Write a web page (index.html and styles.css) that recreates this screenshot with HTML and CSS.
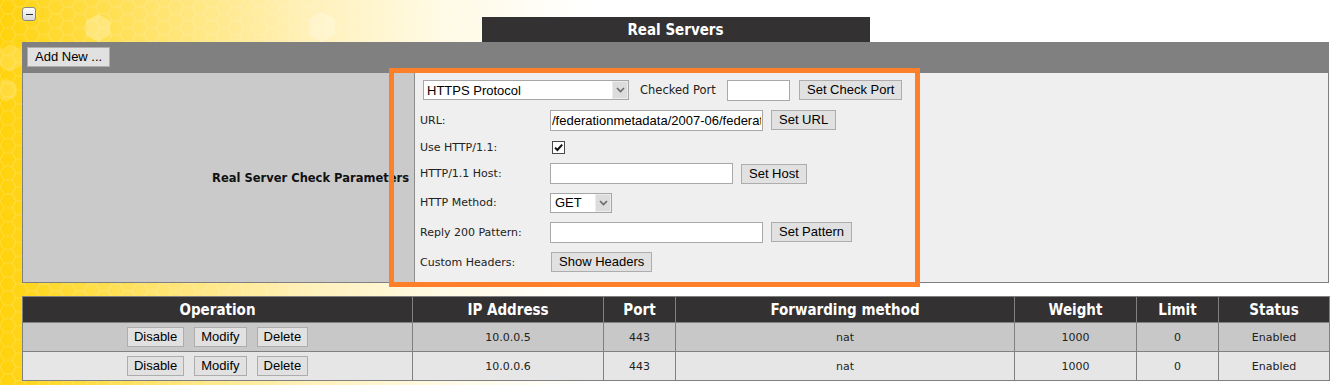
FILE: index.html
```html
<!DOCTYPE html>
<html lang="en">
<head>
<meta charset="utf-8">
<title>Real Servers</title>
<link rel="stylesheet" href="styles.css">
</head>
<body>
<svg class="bg-hex" width="1344" height="385" viewBox="0 0 1344 385" aria-hidden="true">
  <defs>
    <pattern id="hex" width="24" height="13.856" patternUnits="userSpaceOnUse">
      <path d="M4 0 L12 0 L16 6.928 L12 13.856 L4 13.856 L0 6.928 Z M16 6.928 L24 6.928" fill="none" stroke="#ffffff" stroke-opacity="0.22" stroke-width="1"/>
    </pattern>
    <linearGradient id="fade" x1="0" y1="0" x2="1344" y2="0" gradientUnits="userSpaceOnUse">
      <stop offset="0" stop-color="#fff" stop-opacity="1"/>
      <stop offset="0.33" stop-color="#fff" stop-opacity="0.7"/>
      <stop offset="0.5" stop-color="#fff" stop-opacity="0"/>
    </linearGradient>
    <mask id="fadeMask">
      <rect x="0" y="0" width="1344" height="385" fill="url(#fade)"/>
    </mask>
  </defs>
  <g mask="url(#fadeMask)">
    <rect x="0" y="0" width="1344" height="385" fill="url(#hex)"/>
    <polygon points="98,14 110.1,21 110.1,35 98,42 85.9,35 85.9,21" fill="#ffffff" fill-opacity="0.28"/>
    <polygon points="322,12 335,19.5 335,34.5 322,42 309,34.5 309,19.5" fill="#ffffff" fill-opacity="0.3"/>
    <polygon points="10,44 22.1,51 22.1,65 10,72 -2.1,65 -2.1,51" fill="#ffffff" fill-opacity="0.18"/>
    <polygon points="6,78 16.4,84 16.4,96 6,102 -4.4,96 -4.4,84" fill="#ffffff" fill-opacity="0.18"/>
  </g>
</svg>
<div class="wrap">
  <div class="titlebar">
    <button class="toggle" type="button" aria-label="Collapse"><span class="toggle-bar"></span></button>
    <h1 class="title">Real Servers</h1>
  </div>
  <div class="panel">
    <div class="panel-head">
      <button class="btn" type="button">Add New ...</button>
    </div>
    <div class="panel-body">
      <div class="param-label">Real Server Check Parameters</div>
      <div class="param-form">
        <div class="frow frow-1">
          <span class="sel sel-proto">
            <select><option>HTTPS Protocol</option></select>
            <span class="sel-arrow"><svg width="9" height="6" viewBox="0 0 9 6"><path d="M1 1 L4.5 4.5 L8 1" fill="none" stroke="#6a6a6a" stroke-width="1.6"/></svg></span>
          </span>
          <span class="port-label">Checked Port</span>
          <input class="txt txt-port" type="text" value="">
          <button class="btn btn-port" type="button">Set Check Port</button>
        </div>
        <div class="frow frow-2">
          <span class="flabel">URL:</span>
          <input class="txt txt-url" type="text" value="/federationmetadata/2007-06/federationmetadata.xml">
          <button class="btn btn-after" type="button">Set URL</button>
        </div>
        <div class="frow frow-3">
          <span class="flabel">Use HTTP/1.1:</span>
          <span class="chk" role="checkbox" aria-checked="true"><svg width="11" height="11" viewBox="0 0 11 11"><path d="M2 5.6 L4.4 8 L9.2 2.6" fill="none" stroke="#111" stroke-width="2"/></svg></span>
        </div>
        <div class="frow frow-4">
          <span class="flabel">HTTP/1.1 Host:</span>
          <input class="txt txt-host" type="text" value="">
          <button class="btn btn-after" type="button">Set Host</button>
        </div>
        <div class="frow frow-5">
          <span class="flabel">HTTP Method:</span>
          <span class="sel sel-method">
            <select><option>GET</option></select>
            <span class="sel-arrow"><svg width="9" height="6" viewBox="0 0 9 6"><path d="M1 1 L4.5 4.5 L8 1" fill="none" stroke="#6a6a6a" stroke-width="1.6"/></svg></span>
          </span>
        </div>
        <div class="frow frow-6">
          <span class="flabel">Reply 200 Pattern:</span>
          <input class="txt txt-url" type="text" value="">
          <button class="btn btn-after" type="button">Set Pattern</button>
        </div>
        <div class="frow frow-7">
          <span class="flabel">Custom Headers:</span>
          <button class="btn btn-headers" type="button">Show Headers</button>
        </div>
      </div>
    </div>
    <div class="highlight"></div>
  </div>
  <table class="servers">
    <colgroup>
      <col class="c-op"><col class="c-ip"><col class="c-port"><col class="c-fwd"><col class="c-wt"><col class="c-lim"><col class="c-st">
    </colgroup>
    <thead>
      <tr><th>Operation</th><th>IP Address</th><th>Port</th><th>Forwarding method</th><th>Weight</th><th>Limit</th><th>Status</th></tr>
    </thead>
    <tbody>
      <tr class="row-a">
        <td><div class="ops"><button class="btn btn-sm" type="button">Disable</button><button class="btn btn-sm" type="button">Modify</button><button class="btn btn-sm" type="button">Delete</button></div></td>
        <td>10.0.0.5</td><td>443</td><td>nat</td><td>1000</td><td>0</td><td>Enabled</td>
      </tr>
      <tr class="row-b">
        <td><div class="ops"><button class="btn btn-sm" type="button">Disable</button><button class="btn btn-sm" type="button">Modify</button><button class="btn btn-sm" type="button">Delete</button></div></td>
        <td>10.0.0.6</td><td>443</td><td>nat</td><td>1000</td><td>0</td><td>Enabled</td>
      </tr>
    </tbody>
  </table>
</div>
</body>
</html>
```

FILE: styles.css
```css
* { box-sizing: border-box; }

html, body { margin: 0; padding: 0; }

body {
  position: relative;
  width: 1344px;
  height: 385px;
  overflow: hidden;
  font-family: "DejaVu Sans", Verdana, sans-serif;
  font-size: 11px;
  color: #222;
  background: linear-gradient(to right, #ffd20a 0px, #ffd92c 50px, #ffe470 160px, #fff0b6 300px, #fffae4 440px, #ffffff 590px);
}

.bg-hex {
  position: absolute;
  left: 0;
  top: 0;
  pointer-events: none;
}

.wrap {
  position: relative;
  width: 1307px;
  margin-left: 22px;
}

/* title bar */
.titlebar {
  display: grid;
  grid-template-columns: 1fr 388px 1fr;
  padding-top: 7px;
}

.toggle {
  grid-column: 1;
  grid-row: 1;
  justify-self: start;
  align-self: start;
  width: 14px;
  height: 14px;
  padding: 0;
  border: 1px solid #8a8a8a;
  border-radius: 3px;
  background: linear-gradient(#ffffff, #d9d9d9);
  display: flex;
  align-items: center;
  justify-content: center;
}

.toggle-bar {
  width: 7px;
  height: 1px;
  background: #333;
}

.title {
  grid-column: 2;
  grid-row: 1;
  margin: 10px 0 0;
  height: 25px;
  background: #333132;
  color: #fff;
  font-family: "DejaVu Sans Condensed", "DejaVu Sans", sans-serif;
  font-stretch: condensed;
  font-weight: bold;
  font-size: 15px;
  display: flex;
  align-items: center;
  justify-content: center;
}

/* panel */
.panel {
  position: relative;
  border: 1px solid #808080;
  border-top: 0;
}

.panel-head {
  height: 31px;
  background: #808080;
  padding: 5px 4px 0;
}

.panel-body {
  display: flex;
  height: 209px;
}

.param-label {
  width: 392px;
  background: #cacaca;
  border-right: 1px solid #8c8c8c;
  display: flex;
  align-items: center;
  justify-content: flex-end;
  padding-right: 5px;
  font-weight: bold;
  font-size: 11.5px;
  color: #111;
}

.param-form {
  flex: 1;
  background: #efefef;
  padding: 2px 0 4px 5px;
}

.frow {
  display: flex;
  align-items: center;
}

.frow-1 { height: 30px; padding-left: 3px; }
.frow-2 { height: 30px; }
.frow-3 { height: 25px; }
.frow-4 { height: 27px; }
.frow-5 { height: 31px; }
.frow-6 { height: 28px; }
.frow-7 { height: 32px; }

.flabel {
  width: 130px;
  flex: none;
  color: #222;
}

.port-label {
  margin-left: 11px;
  width: 76px;
  font-size: 11.5px;
  color: #222;
}

/* controls */
.btn {
  height: 20px;
  padding: 0 7px;
  border: 1px solid #adadad;
  border-radius: 0;
  background: #e1e1e1;
  color: #000;
  font-family: "Liberation Sans", Arial, sans-serif;
  font-size: 13px;
  line-height: 18px;
  white-space: nowrap;
}

.btn-port { margin-left: 9px; }
.btn-after { margin-left: 8px; }
.btn-headers { margin-left: 1px; }

.txt {
  height: 21px;
  border: 1px solid #a9a9a9;
  background: #fff;
  padding: 0 1px;
  margin: 0;
  color: #000;
  font-family: "Liberation Sans", Arial, sans-serif;
  font-size: 13px;
  outline: none;
}

.txt-port { width: 63px; margin-left: 11px; }
.txt-url { width: 213px; }
.txt-host { width: 183px; }

.sel {
  display: inline-flex;
  height: 20px;
  border: 1px solid #a6a6a6;
  background: #fff;
}

.sel select {
  appearance: none;
  -webkit-appearance: none;
  flex: 1;
  min-width: 0;
  height: 18px;
  border: 0;
  margin: 0;
  padding: 0 3px;
  background: transparent;
  color: #000;
  font-family: "Liberation Sans", Arial, sans-serif;
  font-size: 13px;
  outline: none;
}

.sel-arrow {
  width: 16px;
  flex: none;
  background: #dcdcdc;
  border: 1px solid #ececec;
  display: flex;
  align-items: center;
  justify-content: center;
}

.sel-proto { width: 206px; }
.sel-method { width: 62px; }
.sel-method select { padding-left: 4px; }

.chk {
  width: 13px;
  height: 13px;
  margin-left: 2px;
  border: 1px solid #4a4a4a;
  background: #fff;
  display: flex;
}

/* orange highlight drawn over the form */
.highlight {
  position: absolute;
  left: 366px;
  top: 26px;
  width: 531px;
  height: 219px;
  border: 5px solid #fd7f2a;
  pointer-events: none;
}

/* servers table */
.servers {
  margin-top: 13px;
  width: 1307px;
  border-collapse: collapse;
  table-layout: fixed;
  font-size: 11px;
}

.c-op { width: 390px; }
.c-ip { width: 191px; }
.c-port { width: 72px; }
.c-fwd { width: 339px; }
.c-wt { width: 122px; }
.c-lim { width: 82px; }
.c-st { width: 111px; }

.servers th,
.servers td {
  border: 1px solid #808080;
  padding: 0;
  text-align: center;
  vertical-align: middle;
}

.servers th {
  height: 26px;
  background: #333132;
  color: #fff;
  font-family: "DejaVu Sans Condensed", "DejaVu Sans", sans-serif;
  font-stretch: condensed;
  font-weight: bold;
  font-size: 15px;
}

.servers td {
  height: 29px;
  color: #222;
}

.row-a td { background: #c8c8c8; }
.row-b td { background: #e6e6e6; }

.ops {
  display: flex;
  justify-content: center;
  gap: 10px;
}

.btn-sm {
  padding: 0 6px;
}
```
